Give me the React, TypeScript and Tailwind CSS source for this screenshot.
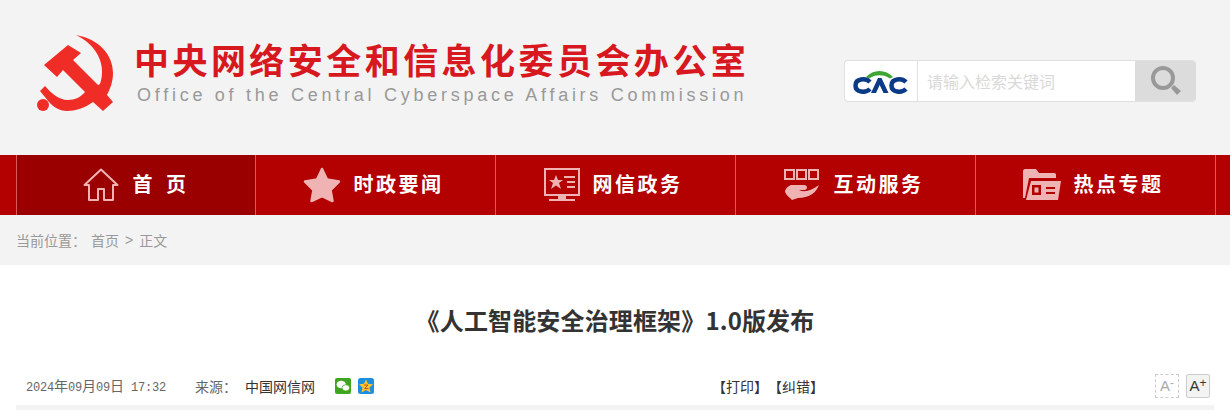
import React from "react";

const cjk = "font-['Noto_Sans_CJK_SC','Liberation_Sans',sans-serif]";
const pale = "#efb3b3";

const PartyLogo = () => (
  <svg width="80" height="80" viewBox="0 0 80 80" className="block">
    {/* sickle */}
    <path
      d="M39 0 C62 4 76 20 76 38 C76 47 73 54 70 60 L76 67 L66 76 L56 67 C48 73 38 76 30 76 C24 76 17 73 12 67 L3 56 L8 51 C14 58 22 65 31 65 C38 65 44 62 48 57 L63 49 C67 38 65 26 59 17 C54 9 47 4 39 0 Z"
      fill="#f02c26"
    />
    <circle cx="6" cy="70" r="6" fill="#f02c26" />
    {/* hammer */}
    <path d="M31 10 L44 18 L36 25 L70 59 L60 69 L26 35 L20 42 L7 30 Z" fill="#f02c26" />
  </svg>
);

const CacLogo = () => (
  <svg width="56" height="28" viewBox="0 0 56 28">
    <path d="M13 10 C20 2 33 2 40 10 L37 11.500 C31 7 22 7 16 11.500 Z" fill="#3fa535" />
    <g fill="none" stroke="#0b3a86" strokeWidth="4.500">
      <path d="M17 15 C13 11 2.500 11 2.500 18.500 C2.500 26 13 26 17 22" />
      <path d="M53 15 C49 11 38.500 11 38.500 18.500 C38.500 26 49 26 53 22" />
    </g>
    <path d="M18 26 L25 11 L28.500 11 L35.500 26 L30.500 26 L26.700 18 L23 26 Z" fill="#0b3a86" />
  </svg>
);

const HomeIcon = () => (
  <svg width="36" height="34" viewBox="0 0 36 34">
    <path
      d="M6 17 H1.500 L18 1.500 L34.500 17 H30 V32 H21 V21 H15 V32 H6 Z"
      fill="none"
      stroke={pale}
      strokeWidth="2"
      strokeLinejoin="round"
    />
  </svg>
);

const StarIcon = () => (
  <svg width="38" height="36" viewBox="0 0 38 36">
    <path
      d="M19 2 L24 12.500 L36 14.500 L27.500 23 L29.500 34 L19 29 L8.500 34 L10.500 23 L2 14.500 L14 12.500 Z"
      fill={pale}
      stroke={pale}
      strokeWidth="2.500"
      strokeLinejoin="round"
    />
  </svg>
);

const ScreenIcon = () => (
  <svg width="36" height="34" viewBox="0 0 36 34">
    <path d="M1 1 H35 V27 H1 Z" fill="none" stroke={pale} strokeWidth="2" />
    <path d="M12 7 L14 12 L19 12 L15 15 L17 21 L12 17.500 L7 21 L9 15 L5 12 L10 12 Z" fill={pale} />
    <path d="M20 9 H31 M23 14 H31 M23 19 H31" stroke={pale} strokeWidth="2" />
    <path d="M14 28 H22 V31 H31 V33 H5 V31 H14 Z" fill={pale} />
  </svg>
);

const HandIcon = () => (
  <svg width="38" height="34" viewBox="0 0 38 34">
    <g fill="none" stroke={pale} strokeWidth="2">
      <rect x="2" y="2" width="9" height="9" />
      <rect x="14" y="2" width="9" height="9" />
      <rect x="26" y="2" width="9" height="9" />
    </g>
    <path
      d="M8 17 H21 C25 17 25 22 21 22 H16 C22 25 29 22 36 17 C33 25 26 30 15 30 L9 32 C5 28 2 26 2 23 C3 20 5 18 8 17 Z"
      fill={pale}
    />
  </svg>
);

const FolderIcon = () => (
  <svg width="38" height="34" viewBox="0 0 38 34">
    <path d="M0 3 C0 2 1 1 2 1 H13 L16 5 H31 C33 5 33 6 33 8 V10 H6 L2 30 L0 30 Z" fill={pale} />
    <path d="M8 13 H38 L35 32 H3 Z" fill={pale} />
    <rect x="9" y="17" width="9" height="10" fill="#b30000" />
    <rect x="11.500" y="19.500" width="4" height="5" fill={pale} />
    <path d="M23 20 H32 M23 25 H32" stroke="#b30000" strokeWidth="2" />
  </svg>
);

const SearchIcon = () => (
  <svg width="34" height="34" viewBox="0 0 34 34">
    <circle cx="14" cy="14" r="10" fill="none" stroke="#999999" strokeWidth="4" />
    <path d="M22 24 L25 21 L32 27 L28 31 Z" fill="#999999" />
  </svg>
);

const WeChatIcon = () => (
  <svg width="16" height="16" viewBox="0 0 16 16">
    <rect width="16" height="16" rx="2" fill="#3fa51f" />
    <ellipse cx="6.200" cy="6.500" rx="4.600" ry="3.800" fill="#ffffff" />
    <ellipse cx="10.800" cy="9.800" rx="3.800" ry="3.100" fill="#ffffff" stroke="#3fa51f" strokeWidth="0.700" />
  </svg>
);

const QzoneIcon = () => (
  <svg width="16" height="16" viewBox="0 0 16 16">
    <rect width="16" height="16" rx="2.500" fill="#1d8fe0" />
    <path d="M8 1.500 L10 5.800 L15 6.300 L11.500 9.500 L12.500 14.500 L8 12 L3.500 14.500 L4.500 9.500 L1 6.300 L6 5.800 Z" fill="#fbc52b" />
    <path d="M6 7 H10 L6.500 10.500 H10.500" fill="none" stroke="#c9541a" strokeWidth="1" />
  </svg>
);

// digits in the reference are half-width, so they get a smaller mono size
const Num = ({ children }: { children: React.ReactNode }) => (
  <span className="font-['Liberation_Mono',monospace] text-[12px] tracking-[-0.2px]">{children}</span>
);

const navItems = [
  { label: "首 页", icon: <HomeIcon />, active: true },
  { label: "时政要闻", icon: <StarIcon /> },
  { label: "网信政务", icon: <ScreenIcon /> },
  { label: "互动服务", icon: <HandIcon /> },
  { label: "热点专题", icon: <FolderIcon /> },
];

export default function App() {
  return (
    <div className={`h-[410px] w-[1230px] overflow-hidden bg-white ${cjk}`}>
      {/* Header */}
      <header className="flex h-[155px] items-start justify-between bg-[#f3f3f3] pr-[34px]">
        <div className="flex pl-[37px] pt-[35px]">
          <PartyLogo />
          <div className="ml-[19px] flex w-[620px] flex-col">
            <h1 className="-ml-[2px] h-[45px] -translate-y-[1px] whitespace-nowrap text-[35px] font-bold leading-[50px] tracking-[3.450px] text-[#d7181f]">
              中央网络安全和信息化委员会办公室
            </h1>
            <p className="mt-[3px] whitespace-nowrap pl-[1px] font-['Liberation_Sans',sans-serif] text-[18px] leading-[24px] tracking-[3.740px] text-[#999999]">
              Office of the Central Cyberspace Affairs Commission
            </p>
          </div>
        </div>
        <div className="mt-[60px] flex h-[42px] w-[352px] overflow-hidden rounded-[4px] border border-r-0 border-[#e0e0e0] bg-white">
          <div className="flex w-[73px] items-center justify-center border-r border-[#e0e0e0]">
            <CacLogo />
          </div>
          <div className="flex flex-1 items-center pl-[9px] text-[16px] text-[#d9d9d9]">请输入检索关键词</div>
          <div className="flex w-[61px] items-center justify-center bg-[#dcdcdc]">
            <SearchIcon />
          </div>
        </div>
      </header>

      {/* Nav */}
      <nav className="flex h-[60px] bg-[#b30000] pl-[16px]">
        {navItems.map((item) => (
          <div
            key={item.label}
            className={`flex h-full items-center justify-center gap-[13px] border-l border-[#d9585a] ${
              item.active ? "w-[239px] bg-[#9b0000]" : "w-[240px] pr-[5px]"
            }`}
          >
            {item.icon}
            <span
              className={`whitespace-pre pb-[3px] text-[20px] font-bold leading-none text-white ${
                item.active ? "tracking-[2.500px] [word-spacing:4px]" : "tracking-[2.500px]"
              }`}
            >
              {item.label}
            </span>
          </div>
        ))}
        <div className="h-full w-px bg-[#d9585a]" />
      </nav>

      {/* Breadcrumb */}
      <div className="flex h-[50px] items-center bg-[#f3f3f3] pl-[16px] text-[14px] text-[#999999]">
        <span>当前位置：</span>
        <span className="ml-[5px]">首页</span>
        <span className="mx-[6px] font-['Liberation_Sans',sans-serif]">&gt;</span>
        <span>正文</span>
      </div>

      {/* Article head */}
      <main className="px-[16px]">
        <h2 className="mt-[35px] h-[40px] text-center text-[24px] font-bold leading-[40px] tracking-[0.150px] text-[#333333]">
          《人工智能安全治理框架》1.0版发布
        </h2>
        <div className="mt-[31px] flex h-[30px] items-center pl-[10px] text-[14px]">
          <div className="flex w-[686px] items-center">
            <span className="whitespace-pre text-[#666666]">
              <Num>2024</Num>年<Num>09</Num>月<Num>09</Num>日<Num> 17:32</Num>
            </span>
            <span className="ml-[29px] text-[#666666]">来源：</span>
            <span className="ml-[8px] text-[#333333]">中国网信网</span>
            <span className="ml-[20px] flex gap-[7px]">
              <WeChatIcon />
              <QzoneIcon />
            </span>
          </div>
          <div className="text-[14px] text-[#333333] [text-spacing-trim:space-all]">【打印】【纠错】</div>
          <div className="ml-auto mr-[4px] flex gap-[7px] font-['Liberation_Sans',sans-serif]">
            <div className="flex h-[24px] w-[24px] items-center justify-center border border-dashed border-[#cccccc] text-[15px] text-[#aaaaaa]">
              A<span className="-mt-[6px] text-[12px] leading-none">-</span>
            </div>
            <div className="flex h-[24px] w-[24px] items-center justify-center rounded-[2px] border border-[#cccccc] bg-[#f3f3f3] text-[15px] text-[#333333]">
              A<span className="-mt-[6px] text-[12px] leading-none">+</span>
            </div>
          </div>
        </div>
        <div className="mt-[4px] h-[5px] bg-[#f3f3f3]" />
      </main>
    </div>
  );
}
